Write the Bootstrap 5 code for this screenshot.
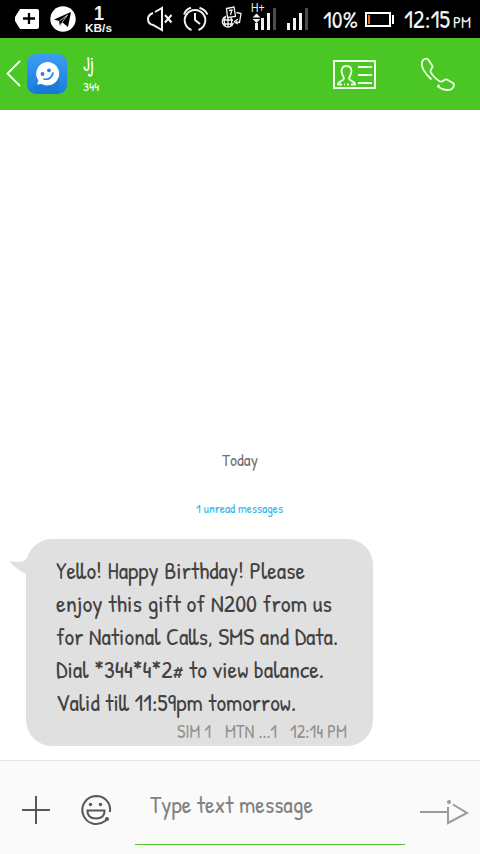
<!DOCTYPE html>
<html lang="en">
<head>
<meta charset="utf-8">
<meta name="viewport" content="width=device-width, initial-scale=1">
<title>Messages</title>
<link href="https://cdn.jsdelivr.net/npm/bootstrap@5.3.0/dist/css/bootstrap.min.css" rel="stylesheet">
<style>
body{width:480px;height:854px;overflow:hidden;font-family:"Patrick Hand","Lato","Open Sans",sans-serif;background:#fff;color:#424242}
svg{display:block;flex:none;overflow:visible}
.fit{display:block;flex:none;white-space:nowrap}
.fit>span{display:inline-block;transform-origin:0 50%}
.statusbar{height:38px;background:#000;color:#f2f2f2}
.tagicons{width:76px}
.speed{margin:3px 0 0 9px;width:27px;font-family:"Liberation Sans",sans-serif;font-weight:700}
.speed .num{font-size:21px;line-height:20px;margin-left:9px}
.speed .unit{font-size:11.5px;line-height:10px}
.pct{font-size:24px;line-height:38px;margin:0 0 0 15px}
.batt{margin-left:6px}
.clock{font-size:24.5px;line-height:38px;margin:0 0 0 10px}
.ampm{font-size:17.5px;line-height:38px;margin:3px 0 0 3px}
.titlebar{height:72px;background:#4ac625;color:#fff}
.names{margin-left:16px;width:100px;padding-top:14px}
.names .who{font-size:21px;line-height:24px}
.names .nr{font-size:13px;line-height:20px}
.thread{height:650px}
.day{font-size:17.5px;line-height:20px;color:#757575;padding:340px 0 0 222px}
.unread{font-size:13.2px;line-height:16px;color:#33b5e5;padding:30px 0 0 196px}
.bubble{width:347px;height:207px;margin:23px 0 0 26px;border-radius:26px;background:#e0e0e0;padding:15px 0 0 30px}
.tail{left:-17px;top:17px}
.msg .fit{font-size:24px;line-height:33px}
.meta{width:170px;font-size:19.5px;line-height:22px;color:#929292;margin:1px 0 0 121px}
.composer{height:94px;background:#fafafa;border-top:1px solid #e6e6e6}
.entry{width:270px;height:84px;margin-left:24px;border-bottom:1px solid #4fc62b;padding:27px 0 0 15px;font-size:24px;line-height:32px;color:#828282}
</style>
</head>
<body>
<div class="statusbar d-flex align-items-start">
  <svg class="tagicons" height="38" viewBox="0 0 76 38">
    <path d="M20 9H37Q39 9 39 11V27Q39 29 37 29H20L15 21V17Z" fill="#fff"/>
    <path d="M23 18.500H35M29 13V24" stroke="#000" stroke-width="2.300"/>
    <circle cx="63" cy="19" r="12.700" fill="#fff"/>
    <path d="M54 19.500L71 12L68 27L62.500 22.500L60 26L59 21Z" fill="#000"/>
    <path d="M59.500 21L67.500 15L62 22.500L60.300 25" stroke="#fff" stroke-width=".7" fill="none"/>
  </svg>
  <div class="speed">
    <div class="fit num" data-w="10"><span>1</span></div>
    <div class="fit unit" data-w="27"><span>KB/s</span></div>
  </div>
  <svg width="196" height="38" viewBox="112 0 196 38" fill="none" stroke="#f2f2f2" stroke-width="2">
    <path d="M153 13Q148 15 148 19Q148 24 153 25L162 30V8L155 12M165 15L171.500 22.500M171.500 15L165 22.500"/>
    <path d="M191.500 30A10.300 10.300 0 1 1 198.500 30M195 13V20L200 24M184 14.500Q186 9 191 7.800M199.500 7.800Q205 9.500 207.500 14.500"/>
    <g stroke-width="1.300"><path d="M226.500 8.500L234 7L235.500 16.500L227.500 17.500ZM229 10.500L232 10L230.500 15M236.500 12.500L241 13.500L239.500 22.500L236 21.800M234 22L238 19M234 22L238 24"/><path d="M226 16A5.700 5.700 0 1 0 233.500 23M222.500 20H233M223 24H233M228 17V27M225.500 17Q223 21 225.500 26.500M230.500 17Q233 21 230.500 26.500"/></g>
    <g stroke="none" fill="#f2f2f2"><path d="M255 23H258V30H255ZM261 18H264V30H261ZM267 13H270V30H267ZM287 23H290V30H287ZM293 18H296V30H293ZM299 13H302V30H299Z"/><path d="M273 8H276V30H273ZM305 8H308V30H305Z" fill="#4c4c4c"/><path d="M256.500 13.500L260.500 17.500H252.500ZM252.500 19H260.500L256.500 23Z"/>
    <text x="251" y="12" font-family="Liberation Sans,sans-serif" font-size="12.500" textLength="13.500" lengthAdjust="spacingAndGlyphs">H+</text></g>
  </svg>
  <div class="fit pct" data-w="35"><span>10%</span></div>
  <svg class="batt" width="30" height="38" viewBox="364 0 30 38"><path d="M366 13H390V26H366Z" fill="none" stroke="#fff" stroke-width="2"/><path d="M392 15H394V24H392Z" fill="#fff"/><path d="M368 15H370V24H368Z" fill="#f56a16"/></svg>
  <div class="fit clock" data-w="46"><span>12:15</span></div>
  <div class="fit ampm" data-w="18"><span>PM</span></div>
</div>

<header class="titlebar d-flex align-items-start">
  <svg width="67" height="72" viewBox="0 38 67 72">
    <defs><linearGradient id="face" x2="0" y2="1"><stop stop-color="#3d9cf4"/><stop offset="1" stop-color="#197edc"/></linearGradient></defs>
    <path d="M20 61L7.500 73.500L20 86" stroke="#fff" stroke-width="1.800" fill="none"/>
    <rect x="27" y="54" width="40" height="40" rx="9" fill="url(#face)"/>
    <path d="M36 83L33 88L36 94H57Q60 90 59 79Z" fill="#126bc8" opacity=".3"/>
    <path d="M47 62A11.700 11.700 0 1 1 43 84.500Q41 83.500 37 84.500L38.500 80.500A11.700 11.700 0 0 1 47 62Z" fill="#fff"/>
    <g fill="#237fe0"><circle cx="42.500" cy="74" r="1.900"/><circle cx="49" cy="70.300" r="1.900"/></g>
    <path d="M44 79Q51 80.500 53 73" fill="none" stroke="#237fe0" stroke-width="1.700" stroke-linecap="round"/>
  </svg>
  <div class="names">
    <div class="fit who" data-w="11"><span>Jj</span></div>
    <div class="fit nr" data-w="16"><span>344</span></div>
  </div>
  <svg class="ms-auto" width="160" height="72" viewBox="320 38 160 72" fill="none" stroke="#f0ffe9" stroke-width="2">
    <path d="M334 61H375V88H334Z"/>
    <path d="M358 67H372M358 75H372M358 83H372"/>
    <path d="M343 76C340 70 342 66 346.500 66S353 70 350 76C348.500 79 349 79.500 351 80.500C354 82 355 82.500 355 84.500H351M343 76C344.500 79 344 79.500 342 80.500C339 82 338 82.500 338 84.500H342M344 84.500H345M347 84.500H349" stroke-width="1.800"/>
    <path d="M431.500 79.500C425 73.500 421 66.500 422 62C423 58.500 427 57.500 428.500 60L432.500 66C433 68 430 69.500 430.500 71.500C432 75 436 79 440 81.500C443 82.500 444 79 447 79.500L453 83C455.500 85.500 452.500 90 448 90C444 90 440.500 88.500 438 86.500" stroke-width="1.800"/><circle cx="438.500" cy="86" r="1.600" fill="#f0ffe9" stroke="none"/>
  </svg>
</header>

<main class="thread">
  <div class="day"><div class="fit" data-w="36"><span>Today</span></div></div>
  <div class="unread"><div class="fit" data-w="87"><span>1 unread messages</span></div></div>
  <div class="bubble position-relative">
    <svg class="tail position-absolute" width="26" height="20" viewBox="9 556 26 20"><path d="M9 561Q23 564 27 558L35 556V576L26 574Q17 570 9 561Z" fill="#e0e0e0"/></svg>
    <div class="msg">
      <div class="fit" data-w="249"><span>Yello! Happy Birthday! Please</span></div>
      <div class="fit" data-w="276"><span>enjoy this gift of N200 from us</span></div>
      <div class="fit" data-w="282"><span>for National Calls, SMS and Data.</span></div>
      <div class="fit" data-w="268"><span>Dial *344*4*2# to view balance.</span></div>
      <div class="fit" data-w="240"><span>Valid till 11:59pm tomorrow.</span></div>
    </div>
    <div class="meta d-flex">
      <div class="fit" data-w="34"><span>SIM 1</span></div>
      <div class="fit ms-auto" data-w="52"><span>MTN ...1</span></div>
      <div class="fit ms-auto" data-w="57"><span>12:14 PM</span></div>
    </div>
  </div>
</main>

<footer class="composer d-flex align-items-start">
  <svg width="111" height="93" viewBox="0 761 111 93" fill="none" stroke="#575757" stroke-width="2">
    <path d="M22 810H50M36 796V824"/>
    <path d="M110 812C111 803 105 796 96 796A14 14 0 1 0 105 821L107 819M87.500 810.500H104.500C105 815 102 818.500 96 818.500S87 815 87.500 810.500Z"/>
    <g fill="#575757" stroke="none"><circle cx="90.500" cy="804.500" r="1.700"/><circle cx="100.500" cy="804.500" r="1.700"/><circle cx="107" cy="819" r="2"/></g>
  </svg>
  <div class="entry"><div class="fit" data-w="163"><span>Type text message</span></div></div>
  <svg width="75" height="93" viewBox="405 761 75 93" fill="none" stroke="#9b9b9b" stroke-width="2">
    <path d="M420 812H448M448 807V823L467 813L453 804.500"/><circle cx="449" cy="802" r="2" fill="#9b9b9b" stroke="none"/>
  </svg>
</footer>
<script src="https://cdn.jsdelivr.net/npm/bootstrap@5.3.0/dist/js/bootstrap.bundle.min.js"></script>
<script>
// Condense each line of text to its column width.
document.querySelectorAll('.fit').forEach(function (box) {
  var line = box.firstElementChild, w = +box.dataset.w;
  var natural = line.getBoundingClientRect().width;
  line.style.transform = 'scaleX(' + w / natural + ')';
  box.style.width = w + 'px';
});
</script>
</body>
</html>
